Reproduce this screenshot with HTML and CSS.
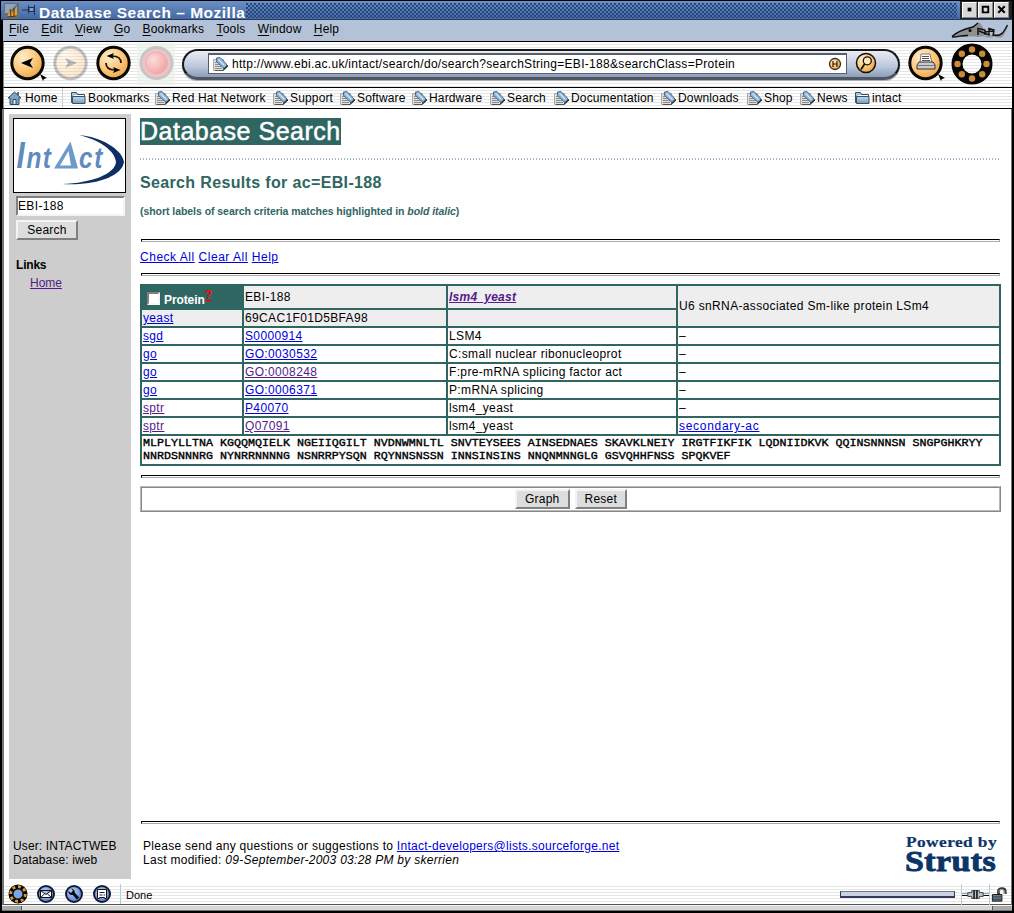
FILE: index.html
```html
<!DOCTYPE html>
<html lang="en">
<head>
<meta charset="utf-8">
<title>Database Search - Mozilla</title>
<link rel="stylesheet" href="styles.css">
</head>
<body>
<svg class="defs" width="0" height="0">
  <defs>
    <radialGradient id="amber" cx="35%" cy="30%" r="85%"><stop offset="0" stop-color="#ffeecb"/><stop offset=".5" stop-color="#fcc779"/><stop offset="1" stop-color="#e59a3c"/></radialGradient>
    <radialGradient id="blue" cx="40%" cy="35%" r="75%"><stop offset="0" stop-color="#b9d0f4"/><stop offset="1" stop-color="#4d77c4"/></radialGradient>
    <radialGradient id="pink" cx="35%" cy="35%" r="80%"><stop offset="0" stop-color="#fbdcdc"/><stop offset="1" stop-color="#f09c9c"/></radialGradient>
    <linearGradient id="fold" x1="0" y1="0" x2="0" y2="1"><stop offset="0" stop-color="#c5dcea"/><stop offset="1" stop-color="#7397b4"/></linearGradient>
    <symbol id="tag" viewBox="0 0 15 14">
      <path d="M.5 2.500h10v11H.5z" fill="#dedede" stroke="#a8a8a8"/>
      <path d="M2 5.500h3M2 7.500h5M2 9.500h7M2 11.500h7" stroke="#8c8c8c"/>
      <path d="M10.500 11v2.500H2" fill="none" stroke="#555"/>
      <path d="M3.500 1L7 .5l5.500 5.500L14.500 9l-3.500 2.500L3.500 4.500z" fill="#8fb2d3" stroke="#3f6180" stroke-width=".9"/>
      <path d="M14.700 8.500L11 12.500" stroke="#1f2f3d" stroke-width="1.300"/>
      <path d="M5.500 2.500l6 6" stroke="#d5e7f5" stroke-width="1.300"/>
    </symbol>
    <symbol id="folder" viewBox="0 0 15 14">
      <path d="M.5 11.500v-10h5l1 2h7v8z" fill="#a9c6d9" stroke="#33526c"/>
      <path d="M1.500 12.500v-7h12.500v7z" fill="url(#fold)" stroke="#33526c"/>
      <path d="M3 4.500h10" stroke="#fff"/>
    </symbol>
  </defs>
</svg>
<div class="window">
  <header class="titlebar">
    <svg class="appicon" width="15" height="16" viewBox="0 0 15 16"><rect width="15" height="16" fill="#5e6f80"/><path d="M1 1h12L4 10H1z" fill="#8fa6b8"/><path d="M3 14l3-8 2 4 5-7v11z" fill="#e39b36"/><path d="M3 14l10-1M6 6l1 8M10 5v9" stroke="#4d3312"/></svg>
    <svg class="pin" width="15" height="12" viewBox="0 0 15 12"><path d="M0 6h6M6.500 1.500v8M12.500 1v10M7 3.500h5v4H7z" fill="#7b9fd0" stroke="#1b2f55"/></svg>
    <h1 class="wintitle">Database Search – Mozilla</h1>
    <span class="grip"></span>
    <div class="winbtns">
      <svg width="14" height="15" viewBox="0 0 14 15"><path d="M5 5h4v4H5z"/></svg>
      <svg width="14" height="15" viewBox="0 0 14 15"><path d="M4 4h6v6H4z" fill="none" stroke="#000" stroke-width="2"/></svg>
      <svg width="14" height="15" viewBox="0 0 14 15"><path d="M3.500 3.500l7 7m0-7l-7 7" stroke="#000" stroke-width="2.200"/></svg>
    </div>
  </header>
  <nav class="menubar">
    <span><u>F</u>ile</span><span><u>E</u>dit</span><span><u>V</u>iew</span><span><u>G</u>o</span><span><u>B</u>ookmarks</span><span><u>T</u>ools</span><span><u>W</u>indow</span><span><u>H</u>elp</span>
    <svg class="shark" width="58" height="18" viewBox="0 0 58 18"><path d="M1 15C6 10 13 7 22 5l6-5 4 5 1 9-6 1c-8-2-17 1-26 0z" fill="#8d8f91"/><path d="M32 14c3 2 7 2 11 1l7 1c3-2 5-6 7-12-3 6-6 8-10 8z" fill="#9a9c9e"/><path d="M1 14.500C6 10 13 7 22 5l5-4M1 15c7 0 10-2 16-1.500M27 13V6.500l7 1.500v5M28 9l10 4V6.500l5 1.500-1 6M34 10l8-1M43 13c7 2 10-3 13.500-10" fill="none" stroke="#111" stroke-width="1.500"/><circle cx="19" cy="8.500" r="1.500"/></svg>
  </nav>
  <div class="toolbar striped">
    <svg class="tb" width="38" height="38" viewBox="0 0 38 38"><circle cx="17.500" cy="18" r="15.700" fill="url(#amber)" stroke="#0b0906" stroke-width="3"/><path d="M11 18l12-5-3 5 3 5z"/><path d="M30 29l7 4-3 1-1 2z"/></svg>
    <svg class="tb faded" width="38" height="38" viewBox="0 0 38 38"><circle cx="17.500" cy="18" r="15.700" fill="url(#amber)" stroke="#222" stroke-width="3"/><path d="M24 18l-12-5 3 5-3 5z"/></svg>
    <svg class="tb" width="38" height="38" viewBox="0 0 38 38"><circle cx="17.500" cy="18" r="15.700" fill="url(#amber)" stroke="#0b0906" stroke-width="3"/><path d="M25 18c0-4-3-7-9-7M10 18c0 4 3 7 9 7" fill="none" stroke="#1a1208" stroke-width="1.700"/><path d="M10.500 11L18 8l-1.500 3L18 14zM24.500 25L17 28l1.500-3L17 22z"/></svg>
    <svg class="stop" width="38" height="42" viewBox="0 0 38 42"><rect width="38" height="42" fill="#e9f1e9" opacity=".7"/><circle cx="19.500" cy="20" r="15.500" fill="#eec5c5" stroke="#c9c5c5" stroke-width="3"/><circle cx="19.500" cy="20" r="11" fill="url(#pink)" stroke="#eab0b0"/></svg>
    <div class="pill">
      <div class="urlbox"><svg width="15" height="14"><use href="#tag"/></svg><span class="url">http://www.ebi.ac.uk/intact/search/do/search?searchString=EBI-188&amp;searchClass=Protein</span>
        <svg class="hist" width="14" height="14" viewBox="0 0 14 14"><circle cx="7" cy="7" r="5.500" fill="url(#amber)" stroke="#3a2a14" stroke-width="1.300"/><path d="M5 4v6M9 4v6M5 7h4" stroke="#2a1b08" stroke-width="1.200"/></svg></div>
      <svg class="find" width="22" height="22" viewBox="0 0 22 22"><circle cx="11" cy="11" r="9.500" fill="url(#amber)" stroke="#14100a" stroke-width="1.500"/><circle cx="12.300" cy="8.800" r="4" fill="#ffe6bd" stroke="#14100a" stroke-width="1.300"/><path d="M9.600 12L6 17.500" stroke="#14100a" stroke-width="1.800"/></svg>
    </div>
    <svg class="print" width="38" height="38" viewBox="0 0 38 38"><circle cx="17.500" cy="18" r="15.700" fill="url(#amber)" stroke="#0b0906" stroke-width="3"/><path d="M13 9h9l2 9H12z" fill="#fff" stroke="#777"/><path d="M14 11.500h7M14 13.500h7M14 15.500h8" stroke="#555"/><path d="M11 17h14l2 3v4H9v-4z" fill="#c9cbd0" stroke="#333"/><path d="M9 20.500h18" stroke="#777"/><path d="M30 29l7 4-3 1-1 2z"/></svg>
    <svg class="throb" width="42" height="42" viewBox="0 0 42 42"><circle cx="21" cy="21" r="15" fill="none" stroke="#060504" stroke-width="11"/><g fill="#c98a3a"><circle cx="21" cy="6.500" r="3.200"/><circle cx="31.200" cy="10.800" r="3.200"/><circle cx="35.500" cy="21" r="3.200"/><circle cx="31.200" cy="31.200" r="3.200"/><circle cx="21" cy="35.500" r="3.200"/><circle cx="10.800" cy="31.200" r="3.200"/><circle cx="6.500" cy="21" r="3.200"/><circle cx="10.800" cy="10.800" r="3.200"/></g></svg>
  </div>
  <nav class="bookmarks striped">
    <span class="bm home"><svg width="15" height="14" viewBox="0 0 15 14"><path d="M1 7L7.500 1 14 7h-2v6.500H3V7z" fill="#7fa3c0" stroke="#2d4a63"/><path d="M6 13V8.500h3V13" fill="#e8eef3" stroke="#2d4a63"/><path d="M11 1v3" stroke="#2d4a63" stroke-width="1.500"/></svg>Home</span>
    <span class="bm folder1"><svg width="15" height="14"><use href="#folder"/></svg>Bookmarks</span>
    <span class="bm rhn"><svg width="15" height="14"><use href="#tag"/></svg>Red Hat Network</span>
    <span class="bm support"><svg width="15" height="14"><use href="#tag"/></svg>Support</span>
    <span class="bm software"><svg width="15" height="14"><use href="#tag"/></svg>Software</span>
    <span class="bm hardware"><svg width="15" height="14"><use href="#tag"/></svg>Hardware</span>
    <span class="bm searchbm"><svg width="15" height="14"><use href="#tag"/></svg>Search</span>
    <span class="bm docs"><svg width="15" height="14"><use href="#tag"/></svg>Documentation</span>
    <span class="bm downloads"><svg width="15" height="14"><use href="#tag"/></svg>Downloads</span>
    <span class="bm shop"><svg width="15" height="14"><use href="#tag"/></svg>Shop</span>
    <span class="bm news"><svg width="15" height="14"><use href="#tag"/></svg>News</span>
    <span class="bm"><svg width="15" height="14"><use href="#folder"/></svg>intact</span>
  </nav>
  <div class="page">
    <aside class="sidebar">
      <svg class="logo" width="113" height="75" viewBox="0 0 113 75"><rect x=".5" y=".5" width="112" height="74" fill="#fff" stroke="#000"/><path d="M66 17c22 2 43 14 45 27-2 14-27 24-62 22 30-1 53-10 54-22-1-11-16-22-37-27z" fill="#0d2f63"/><g font-family="Liberation Sans" font-style="italic" font-weight="bold" fill="#5f8bbd"><text transform="translate(3.500 50) scale(.8 1)" font-size="37">I</text><text transform="translate(13.500 50) scale(.84 1)" font-size="29" letter-spacing="1.500">nt</text><text transform="translate(66 50) scale(.84 1)" font-size="29" letter-spacing="2">ct</text></g><path d="M41 50.500L57.500 23.500 65 50.500zM47 47.500h11l-2.500-14.500z" fill="#6f9ac8" fill-rule="evenodd"/></svg>
      <input class="query" type="text" value="EBI-188">
      <button class="btn go">Search</button>
      <b class="links">Links</b>
      <a class="visited homelink" href="#">Home</a>
      <p class="user">User: INTACTWEB<br>Database: iweb</p>
    </aside>
    <main class="main">
      <h2 class="banner">Database Search</h2>
      <div class="dots"></div>
      <h3 class="results">Search Results for ac=EBI-188</h3>
      <p class="note">(short labels of search criteria matches highlighted in <i>bold italic</i>)</p>
      <div class="rule r1"></div>
      <p class="actions"><a href="#">Check All</a> <a href="#">Clear All</a> <a href="#">Help</a></p>
      <div class="rule r2"></div>
      <div class="grid">
        <div class="head"><span class="check"></span><b>Protein</b><a href="#" class="q">?</a></div>
        <div class="g">EBI-188</div><div class="g"><a class="visited hit" href="#">lsm4_yeast</a></div><div class="g desc">U6 snRNA-associated Sm-like protein LSm4</div>
        <div class="g"><a href="#">yeast</a></div><div class="g">69CAC1F01D5BFA98</div><div class="g"></div>
        <div><a href="#">sgd</a></div><div><a href="#">S0000914</a></div><div>LSM4</div><div>–</div>
        <div><a href="#">go</a></div><div><a href="#">GO:0030532</a></div><div>C:small nuclear ribonucleoprot</div><div>–</div>
        <div><a href="#">go</a></div><div><a href="#" class="visited">GO:0008248</a></div><div>F:pre-mRNA splicing factor act</div><div>–</div>
        <div><a href="#">go</a></div><div><a href="#">GO:0006371</a></div><div>P:mRNA splicing</div><div>–</div>
        <div><a href="#" class="visited">sptr</a></div><div><a href="#">P40070</a></div><div>lsm4_yeast</div><div>–</div>
        <div><a href="#" class="visited">sptr</a></div><div><a href="#" class="visited">Q07091</a></div><div>lsm4_yeast</div><div><a href="#" class="secondary">secondary-ac</a></div>
        <div class="seq">MLPLYLLTNA KGQQMQIELK NGEIIQGILT NVDNWMNLTL SNVTEYSEES AINSEDNAES SKAVKLNEIY IRGTFIKFIK LQDNIIDKVK QQINSNNNSN SNGPGHKRYY<br>NNRDSNNNRG NYNRRNNNNG NSNRRPYSQN RQYNNSNSSN INNSINSINS NNQNMNNGLG GSVQHHFNSS SPQKVEF</div>
      </div>
      <div class="rule r3"></div>
      <div class="buttons"><div class="inner"><button class="btn">Graph</button><button class="btn">Reset</button></div></div>
      <div class="rule r4"></div>
      <footer class="foot">
        <p class="contact">Please send any questions or suggestions to <a href="#">Intact-developers@lists.sourceforge.net</a><br>Last modified: <i>09-September-2003 03:28 PM by skerrien</i></p>
        <svg class="struts" width="98" height="44" viewBox="0 0 98 44"><g font-family="Liberation Serif" font-weight="bold" fill="#0b3468" stroke="#0b3468"><text x="2" y="12" font-size="15" stroke-width=".2" textLength="91" lengthAdjust="spacingAndGlyphs">Powered by</text><text x="1" y="36" font-size="30" stroke-width=".9" textLength="91" lengthAdjust="spacingAndGlyphs">Struts</text></g></svg>
      </footer>
    </main>
  </div>
  <div class="status striped">
    <svg width="20" height="20" viewBox="0 0 20 20"><circle cx="10" cy="10" r="7" fill="#7ba4e8" stroke="#0a0704" stroke-width="5"/><circle cx="10" cy="10" r="7.300" fill="none" stroke="#d99a33" stroke-width="2.800" stroke-dasharray="2.900 2.800"/></svg>
    <svg width="20" height="20" viewBox="0 0 20 20"><circle cx="10" cy="10" r="8" fill="url(#blue)" stroke="#101c38" stroke-width="2"/><path d="M4.500 6.500h11v7h-11zl5.500 4 5.500-4M4.500 13.500l4-3.500m3 0l4 3.500" fill="#fff" stroke="#111"/></svg>
    <svg width="20" height="20" viewBox="0 0 20 20"><circle cx="10" cy="10" r="8" fill="url(#blue)" stroke="#101c38" stroke-width="2"/><path d="M9 9l5 5.500" stroke="#050a18" stroke-width="3"/><path d="M7 4.500l2 2L7 9 4.500 7C4 10 7 12 9.500 10.500 12 9 11 5 7 4.500z" fill="#050a18"/></svg>
    <svg width="20" height="20" viewBox="0 0 20 20"><circle cx="10" cy="10" r="8" fill="url(#blue)" stroke="#101c38" stroke-width="2"/><path d="M5.500 5.500h9v9h-2v-1h-5v1h-2z" fill="#fff" stroke="#111"/><path d="M7.500 8.500h5M7.500 11h3m1 0h1.500" stroke="#222"/></svg>
    <span class="done">Done</span>
    <span class="progress"></span>
    <svg class="plug" width="28" height="22" viewBox="0 0 28 22"><path d="M0 11.500h7M21 11.500h7" stroke="#000"/><path d="M0 9.500h6M22 9.500h6" stroke="#999"/><path d="M6 8.500h4v-2h8v2h4v4h-4v2h-8v-2H6z" fill="#b9c3c9" stroke="#444"/><path d="M12.500 6v9M15.500 6v9" stroke="#111" stroke-width="1.600"/></svg>
    <svg class="lock" width="20" height="22" viewBox="0 0 20 22"><path d="M9 10V6.500C9 3.500 16 3.500 16 7v3" fill="none" stroke="#333" stroke-width="3"/><path d="M9.500 9V6.500c0-2 6-2 6 .5v3" fill="none" stroke="#aaa" stroke-width="1"/><path d="M2.500 10.500h10v7h-10z" fill="#6f8291" stroke="#111"/><path d="M3 13h9M3 15.500h9" stroke="#2a3845"/></svg>
  </div>
  <div class="frame-bottom"></div>
</div>
</body>
</html>
```
FILE: styles.css
```css
* { box-sizing: border-box; }
body { margin: 0; background: #000; font: 12px/14px "Liberation Sans", Arial, sans-serif; color: #000; overflow: hidden; }
h1, h2, h3, p { margin: 0; font-weight: normal; }
a { color: #0000e0; }
a.visited { color: #551a8b; }
svg { flex: none; display: block; }
.defs { position: absolute; }

.window { width: 1014px; height: 913px; display: flex; flex-direction: column; padding: 1px 2px 2px 1px; }
.striped { background: repeating-linear-gradient(#fff 0 2px, #e6e6e6 2px 3px); }

.titlebar { height: 19px; display: flex; background: linear-gradient(#6b90c6, #44689f); border-bottom: 1px solid #243a60; }
.appicon { margin: 2px 0 0 3px; }
.pin { margin: 3px 0 0 3px; }
.wintitle { margin: 3px 0 0 2px; height: 15px; font-size: 15.500px; line-height: 18px; font-weight: bold; color: #fff; letter-spacing: .5px; width: 206px; white-space: nowrap; }
.grip { flex: 1; margin: 2px 3px 1px 1px; background: radial-gradient(circle at 1px 1px, #24477f 0 .8px, transparent 1px) 0 0 / 4px 4px, radial-gradient(circle at 3px 3px, #24477f 0 .8px, transparent 1px) 0 0 / 4px 4px; }
.winbtns { display: flex; gap: 1px; background: #222; padding: 1px; width: 52px; padding-left: 2px; }
.winbtns svg { background: #d8d8d8; border: 1px solid; border-color: #fff #888 #888 #fff; width: 15px; height: 16px; }

.menubar { height: 21px; margin-left: 2px; background: #b3c2d6; display: flex; gap: 12.300px; padding: 2px 3px 0 6px; line-height: 15px; letter-spacing: .18px; }
.menubar u { text-underline-offset: 2px; }
.shark { margin: 0 0 0 auto; }

.toolbar { margin-left: 2px; height: 47px; border-top: 1px solid #000; border-bottom: 1px solid #000; display: flex; border-left: 1px solid #888; }
.tb { margin: 3px 5px 0 0; }
.tb:first-child { margin-left: 6px; }
.faded { opacity: .28; }
.stop { margin: 1px 7px 0 -2px; }
.pill { width: 718px; height: 31px; margin-top: 7px; border: 2px solid #16181c; border-bottom: 3px solid #4e5664; border-radius: 16px; display: flex; background: linear-gradient(#eaecf3, #bcc7dc 60%, #8d9cb8); padding: 2px 20px 0 24px; box-shadow: 0 1px 1px #aaa; }
.urlbox { width: 639px; height: 21px; border: 1px solid #555c6a; border-top-width: 2px; background: #fff; display: flex; padding: 1px 4px 0 4px; line-height: 16px; }
.urlbox svg { margin: 1px 4px 0 0; }
.url { letter-spacing: .3px; white-space: nowrap; }
.urlbox .hist { margin: 1px 0 0 auto; }
.find { margin: -1px 0 0 8px; }
.print { margin: 3px 0 0 8px; }
.throb { margin: 1px 0 0 5px; }

.bookmarks { margin-left: 2px; height: 21px; display: flex; border-bottom: 1px solid #000; border-left: 1px solid #888; padding-left: 3px; }
.bm { display: flex; gap: 3px; line-height: 20px; letter-spacing: .15px; white-space: nowrap; }
.bm svg { margin: 3px -1px 0 0; }
.bm.home { width: 56px; border-right: 1px solid #c3d0dd; margin-right: 8px; gap: 4px; }
.folder1 { width: 84px; } .rhn { width: 118px; } .support { width: 67px; } .software { width: 72px; }
.hardware { width: 78px; } .searchbm { width: 64px; } .docs { width: 107px; } .downloads { width: 86px; }
.shop { width: 53px; } .news { width: 55px; }

.page { margin-left: 1px; height: 775px; display: flex; background: #fff; border-left: 2px solid #777; border-right: 1px solid #777; padding: 5px 8px 0 5px; letter-spacing: .35px; }
.sidebar { width: 122px; height: 765px; background: #cdcdcd; padding: 4px; display: flex; flex-direction: column; align-items: flex-start; }
.query { margin: 3px 0 0 3px; width: 109px; height: 20px; border: 2px solid; border-color: #808080 #f4f4f4 #f4f4f4 #808080; padding: 0; font: inherit; letter-spacing: .35px; background: #fff; }
.btn { height: 20px; background: #ddd; border: 2px solid; border-color: #f4f4f4 #808080 #808080 #f4f4f4; font: inherit; letter-spacing: .25px; padding: 0 8px; line-height: 15px; }
.go { margin: 4px 0 0 3px; width: 62px; }
.links { margin: 18px 0 0 3px; letter-spacing: -.2px; }
.homelink { margin: 4px 0 0 17px; letter-spacing: 0; }
.user { margin-top: auto; margin-bottom: 8px; letter-spacing: .12px; white-space: nowrap; }

.main { margin-left: 9px; width: 861px; display: flex; flex-direction: column; align-items: flex-start; }
.banner { margin-top: 4px; height: 27px; width: 201px; background: #2f6662; color: #fff; font-size: 25px; line-height: 26px; letter-spacing: .5px; -webkit-text-stroke: .5px #fff; white-space: nowrap; }
.dots { margin-top: 13px; width: 861px; height: 2px; background: repeating-linear-gradient(90deg, #a3b2c8 0 1px, transparent 1px 3px); }
.results { margin-top: 14px; line-height: 18px; font-size: 16px; font-weight: bold; color: #2f6662; letter-spacing: .35px; }
.note { margin-top: 13px; line-height: 13px; font-size: 10.500px; font-weight: bold; color: #2f6662; letter-spacing: -.05px; }
.rule { width: 859px; height: 3px; margin-left: 1px; border: 1px solid; border-color: #000 #aaa #aaa #000; }
.r1 { margin-top: 21px; }
.actions { margin-top: 8px; line-height: 14px; letter-spacing: .52px; }
.r2 { margin-top: 9px; }
.grid { margin-top: 8px; width: 861px; height: 182px; padding: 2px; background: #2f6662; display: grid; gap: 2px; grid-template-columns: 100px 202px 228px 321px; grid-template-rows: 22px repeat(7, 16px) 28px; }
.grid > div { background: #fff; padding-left: 1px; line-height: 16px; white-space: nowrap; overflow: hidden; }
.grid > .g { background: #eee; display: flex; align-items: center; }
.grid > .desc { grid-row: span 2; }
.grid > .head { background: #2f6662; color: #fff; display: flex; padding: 6px 0 0 5px; letter-spacing: -.1px; overflow: visible; }
.head b { line-height: 16px; }
.check { width: 13px; height: 13px; margin-right: 4px; background: #fff; border: 2px solid; border-color: #808080 #f4f4f4 #f4f4f4 #808080; }
.head .q { color: red; font-weight: bold; font-size: 12px; line-height: 10px; margin-top: -2px; }
.hit { font-weight: bold; font-style: italic; letter-spacing: .25px; }
.secondary { letter-spacing: .7px; }
.grid > .seq { grid-column: 1 / -1; font: 11.667px/13px "Liberation Mono", monospace; letter-spacing: 0; padding-top: 1px; -webkit-text-stroke: .4px #000; }
.r3 { margin-top: 9px; }
.buttons { margin-top: 8px; width: 861px; height: 26px; border: 1px solid; border-color: #b8b8b8 #888 #888 #b8b8b8; }
.inner { height: 24px; border: 1px solid; border-color: #888 #b8b8b8 #b8b8b8 #888; display: flex; justify-content: center; gap: 5px; padding: 1px 0 0 1px; }
.r4 { margin-top: 309px; }
.foot { margin-top: 12px; width: 861px; display: flex; justify-content: space-between; padding-left: 3px; }
.contact { margin-top: 3px; letter-spacing: .28px; }
.struts { margin: -1px -1px 0 0; }

.status { margin-left: 1px; height: 21px; display: flex; border-left: 2px solid #777; border-bottom: 1px solid #555; padding: 0 2px 0 4px; gap: 8px; border-right: 1px solid #777; }
.done { border-left: 1px solid #b8cbe0; margin-left: 0; padding: 4px 0 0 5px; font-size: 11px; }
.progress { margin: 7px 0 0 auto; width: 115px; height: 7px; background: #c9d2e3; border: 1px solid #333a5c; border-top-color: #777; border-bottom-width: 2px; }
.plug { border-left: 1px solid #b8cbe0; margin-left: -2px; }
.lock { border-left: 1px solid #b8cbe0; margin-left: -8px; }
.frame-bottom { margin-left: 1px; height: 6px; background: linear-gradient(90deg, #aaa 19px, #555 19px 20px, #d8d8d8 20px 990px, #555 990px 991px, #aaa 991px); border-top: 1px solid #f4f4f4; border-bottom: 1px solid #777; }
```
